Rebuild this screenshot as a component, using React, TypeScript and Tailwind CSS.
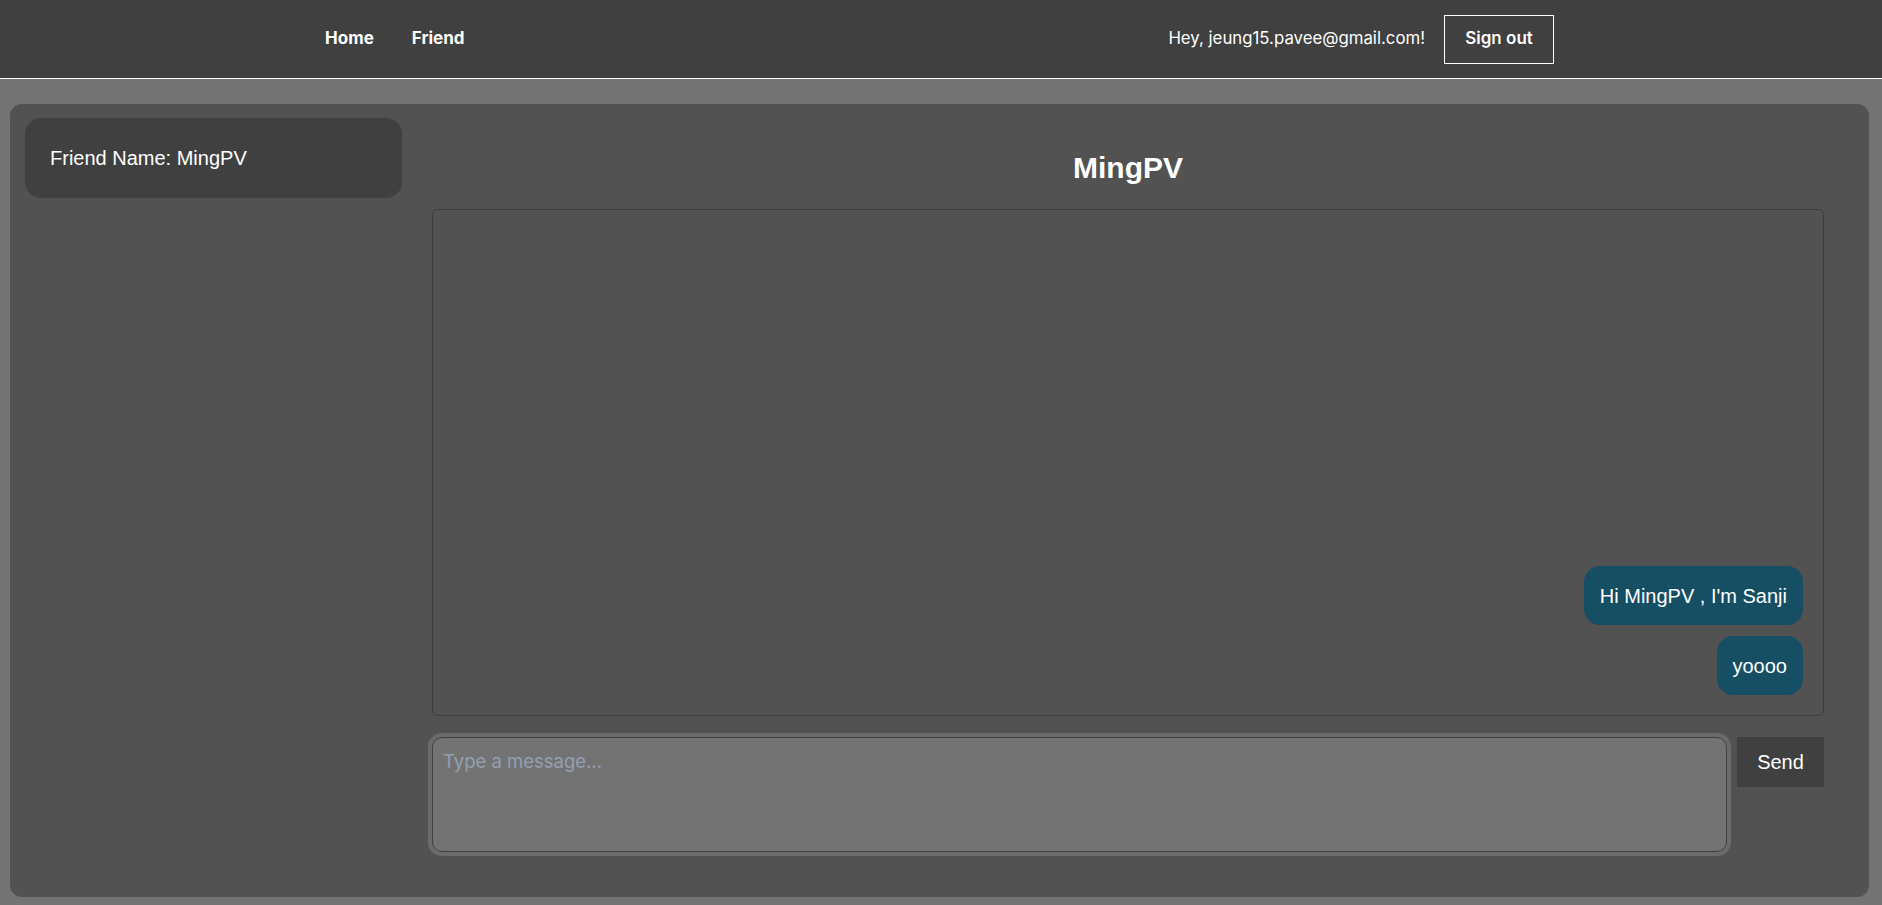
import React from "react";

const messages = ["Hi MingPV , I'm Sanji", "yoooo"];

const Navbar: React.FC = () => {
  return (
    <nav className="h-[79px] bg-[#404040] border-b border-white font-['Inter',sans-serif] text-white">
      <div className="max-w-7xl mx-auto pl-6 pr-[27px] h-full flex flex-row items-center justify-between">
        <div className="flex flex-row items-center gap-[38px] text-[17px] font-bold">
          <a href="#">Home</a>
          <a href="#">Friend</a>
        </div>
        <div className="flex flex-row items-center gap-[19px]">
          <span className="text-[16.8px]">Hey, jeung15.pavee@gmail.com!</span>
          <button className="h-[49px] w-[110px] border border-white text-[17px] font-semibold">
            Sign out
          </button>
        </div>
      </div>
    </nav>
  );
};

const App: React.FC = () => {
  return (
    <div className="min-h-[905px] bg-[#737373] font-['Liberation_Sans',Arial,sans-serif]">
      <Navbar />
      <div className="mt-[25px] ml-[10px] w-[1859px] h-[793px] bg-[#525252] rounded-xl flex flex-row pl-[15px] pt-[14px] pr-[45px]">
        <div className="w-[377px] shrink-0">
          <div className="h-[80px] bg-[#404040] rounded-2xl flex items-center pl-[25px] text-xl text-white">
            Friend Name: MingPV
          </div>
        </div>

        <div className="ml-[30px] flex-1 flex flex-col pt-[32px]">
          <h1 className="text-3xl font-bold text-white text-center h-9">MingPV</h1>

          <div className="mt-[23px] h-[507px] border border-[#3d3d3d] rounded-md p-5 flex flex-col justify-end items-end gap-[11px]">
            {messages.map((m, i) => (
              <div
                key={i}
                className="h-[59px] px-4 flex items-center bg-[#164e63] rounded-2xl text-xl text-white"
              >
                {m}
              </div>
            ))}
          </div>

          <div className="mt-[21px] flex flex-row items-start">
            <textarea
              placeholder="Type a message..."
              className="flex-1 h-[115px] resize-none bg-[#737373] border border-[#404040] rounded-[10px] ring-4 ring-[#6b6b6b] p-2.5 text-[18.5px] text-white font-['Inter',sans-serif] placeholder:text-[#94a0b2] outline-none"
            />
            <button className="ml-[10px] w-[87px] h-[50px] bg-[#404040] text-xl text-white">
              Send
            </button>
          </div>
        </div>
      </div>
    </div>
  );
};

export default App;
